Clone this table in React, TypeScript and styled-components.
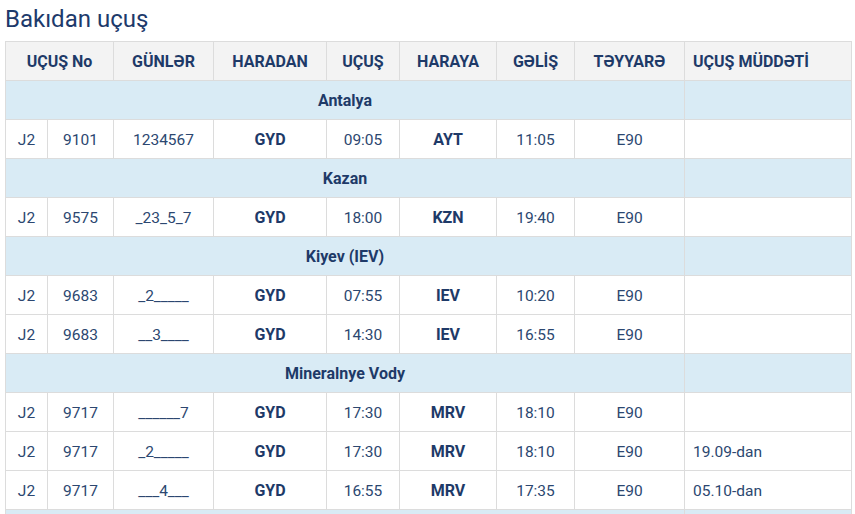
import React from "react";
import styled, { createGlobalStyle } from "styled-components";

const Global = createGlobalStyle`
  html, body { margin: 0; padding: 0; background: #fff; }
  body { font-family: Roboto, "Noto Sans", "Liberation Sans", sans-serif; }
`;

const Page = styled.div`
  padding: 0 5px;
`;

const Title = styled.h2`
  margin: 5px 0 8px 0;
  font-size: 24px;
  line-height: 28px;
  font-weight: 400;
  color: #1d3a6b;
`;

const Table = styled.table`
  border-collapse: collapse;
  table-layout: fixed;
  width: 847px;
  font-size: 15.5px;
  line-height: 20px;
`;

const HeadCell = styled.th<{ $left?: boolean }>`
  background: #f3f3f3;
  border: 1px solid #dcdcdc;
  height: 37px;
  padding: 1px 8px 0;
  font-size: 16px;
  font-weight: 700;
  color: #1e3a68;
  text-align: ${(p) => (p.$left ? "left" : "center")};
  white-space: nowrap;
`;

const GroupCell = styled.td`
  background: #d9ebf5;
  border: 1px solid #dcdcdc;
  height: 37px;
  padding: 1px 8px 0;
  font-size: 16px;
  font-weight: 700;
  color: #1e3a68;
  text-align: center;
`;

const Cell = styled.td<{ $bold?: boolean; $left?: boolean }>`
  border: 1px solid #dcdcdc;
  height: 37px;
  padding: 1px 8px 0;
  font-size: ${(p) => (p.$bold ? "16px" : "15.5px")};
  color: ${(p) => (p.$bold ? "#1e3a68" : "#2c4770")};
  font-weight: ${(p) => (p.$bold ? 700 : 400)};
  text-align: ${(p) => (p.$left ? "left" : "center")};
  white-space: nowrap;
`;

type Flight = {
  no: string;
  days: string;
  from: string;
  dep: string;
  to: string;
  arr: string;
  plane: string;
  note?: string;
};

type Group = { city: string; flights: Flight[] };

const data: Group[] = [
  {
    city: "Antalya",
    flights: [
      { no: "9101", days: "1234567", from: "GYD", dep: "09:05", to: "AYT", arr: "11:05", plane: "E90" },
    ],
  },
  {
    city: "Kazan",
    flights: [
      { no: "9575", days: "_23_5_7", from: "GYD", dep: "18:00", to: "KZN", arr: "19:40", plane: "E90" },
    ],
  },
  {
    city: "Kiyev (IEV)",
    flights: [
      { no: "9683", days: "_2_____", from: "GYD", dep: "07:55", to: "IEV", arr: "10:20", plane: "E90" },
      { no: "9683", days: "__3____", from: "GYD", dep: "14:30", to: "IEV", arr: "16:55", plane: "E90" },
    ],
  },
  {
    city: "Mineralnye Vody",
    flights: [
      { no: "9717", days: "______7", from: "GYD", dep: "17:30", to: "MRV", arr: "18:10", plane: "E90" },
      { no: "9717", days: "_2_____", from: "GYD", dep: "17:30", to: "MRV", arr: "18:10", plane: "E90", note: "19.09-dan" },
      { no: "9717", days: "___4___", from: "GYD", dep: "16:55", to: "MRV", arr: "17:35", plane: "E90", note: "05.10-dan" },
    ],
  },
];

const widths = [42, 66, 100, 113, 73, 97, 78, 110, 167];

export default function App() {
  return (
    <Page>
      <Global />
      <Title>Bakıdan uçuş</Title>
      <Table>
        <colgroup>
          {widths.map((w, i) => (
            <col key={i} style={{ width: w }} />
          ))}
        </colgroup>
        <thead>
          <tr>
            <HeadCell colSpan={2}>UÇUŞ No</HeadCell>
            <HeadCell>GÜNLƏR</HeadCell>
            <HeadCell>HARADAN</HeadCell>
            <HeadCell>UÇUŞ</HeadCell>
            <HeadCell>HARAYA</HeadCell>
            <HeadCell>GƏLİŞ</HeadCell>
            <HeadCell>TƏYYARƏ</HeadCell>
            <HeadCell $left>UÇUŞ MÜDDƏTİ</HeadCell>
          </tr>
        </thead>
        <tbody>
          {data.map((g) => (
            <React.Fragment key={g.city}>
              <tr>
                <GroupCell colSpan={8}>{g.city}</GroupCell>
                <GroupCell />
              </tr>
              {g.flights.map((f, i) => (
                <tr key={i}>
                  <Cell>J2</Cell>
                  <Cell>{f.no}</Cell>
                  <Cell>{f.days}</Cell>
                  <Cell $bold>{f.from}</Cell>
                  <Cell>{f.dep}</Cell>
                  <Cell $bold>{f.to}</Cell>
                  <Cell>{f.arr}</Cell>
                  <Cell>{f.plane}</Cell>
                  <Cell $left>{f.note ?? ""}</Cell>
                </tr>
              ))}
            </React.Fragment>
          ))}
          <tr>
            <GroupCell colSpan={8} />
            <GroupCell />
          </tr>
        </tbody>
      </Table>
    </Page>
  );
}
